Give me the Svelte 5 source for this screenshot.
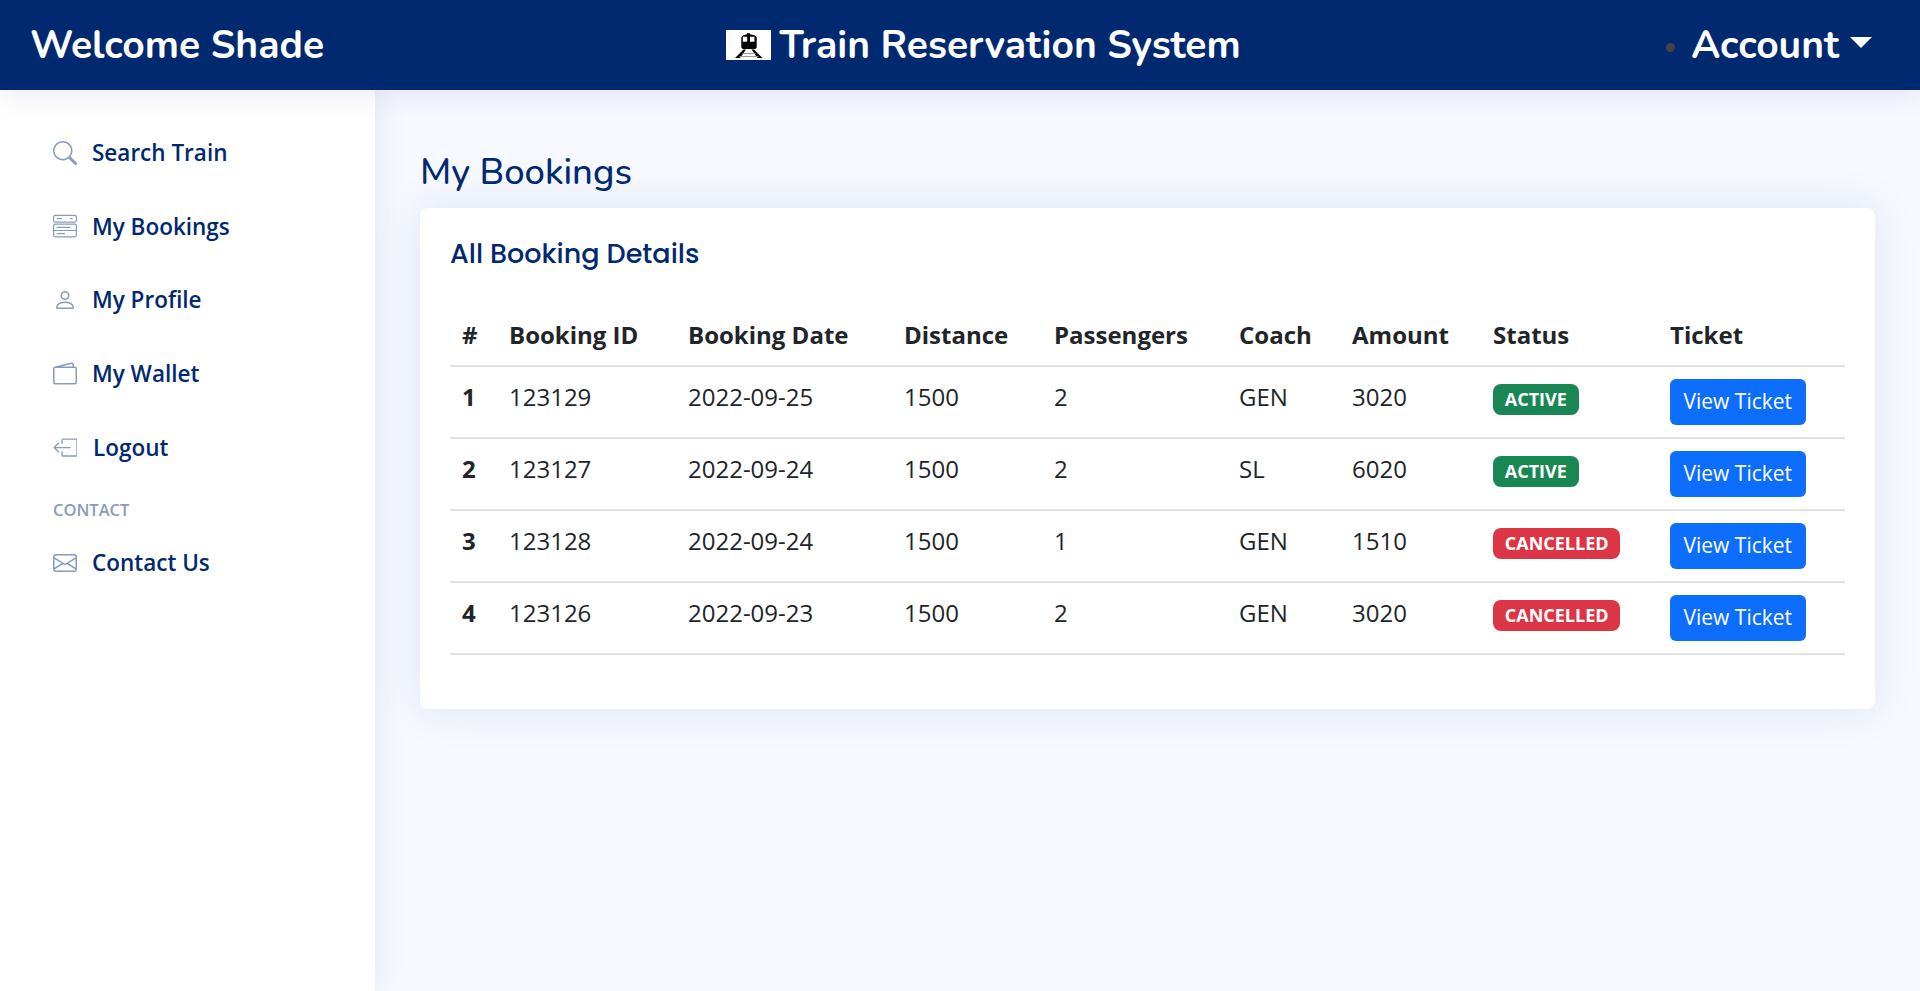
<script>
  const nav = [
    { label: "Search Train", icon: "search" },
    { label: "My Bookings", icon: "stack" },
    { label: "My Profile", icon: "person" },
    { label: "My Wallet", icon: "wallet" },
    { label: "Logout", icon: "logout" },
  ];
  const bookings = [
    { id: 123129, date: "2022-09-25", pax: 2, coach: "GEN", amount: 3020, status: "ACTIVE" },
    { id: 123127, date: "2022-09-24", pax: 2, coach: "SL", amount: 6020, status: "ACTIVE" },
    { id: 123128, date: "2022-09-24", pax: 1, coach: "GEN", amount: 1510, status: "CANCELLED" },
    { id: 123126, date: "2022-09-23", pax: 2, coach: "GEN", amount: 3020, status: "CANCELLED" },
  ];
</script>

{#snippet icon(name)}
  <svg class="icon" viewBox="0 0 16 16" fill="currentColor" aria-hidden="true">
    {#if name === "search"}
      <path d="M11.742 10.344a6.5 6.5 0 1 0-1.397 1.398h-.001c.03.04.062.078.098.115l3.85 3.85a1 1 0 0 0 1.415-1.414l-3.85-3.85a1.007 1.007 0 0 0-.115-.1zM12 6.5a5.5 5.500 0 1 1-11 0 5.5 5.5 0 0 1 11 0z" />
    {:else if name === "stack"}
      <g fill="none" stroke="currentColor" stroke-width=".8">
        <rect x=".4" y=".9" width="15.2" height="4.5" rx="1" />
        <rect x=".4" y="6.8" width="15.2" height="8.400" rx="1" />
        <path d="M.4 11h15.200M2.500 3.100h3.500M11.500 3.100h1.500M2.500 8.900h9M2.500 13.100h5.500" />
      </g>
    {:else if name === "person"}
      <path d="M8 8a3 3 0 1 0 0-6 3 3 0 0 0 0 6zm2-3a2 2 0 1 1-4 0 2 2 0 0 1 4 0zm4 8c0 1-1 1-1 1H3s-1 0-1-1 1-4 6-4 6 3 6 4zm-1-.004c-.001-.246-.154-.986-.832-1.664C11.516 10.68 10.289 10 8 10c-2.29 0-3.516.68-4.168 1.332-.678.678-.83 1.418-.832 1.664h10z" />
    {:else if name === "wallet"}
      <path d="M12.136.326A1.5 1.5 0 0 1 14 1.78V3h.5A1.5 1.5 0 0 1 16 4.5v9a1.5 1.5 0 0 1-1.5 1.5h-13A1.5 1.5 0 0 1 0 13.5v-9a1.5 1.5 0 0 1 1.432-1.499L12.136.326zM5.562 3H13V1.78a.5.5 0 0 0-.621-.484L5.562 3zM1.5 4a.5.5 0 0 0-.5.5v9a.5.5 0 0 0 .5.5h13a.5.5 0 0 0 .5-.5v-9a.5.5 0 0 0-.5-.5h-13z" />
    {:else if name === "logout"}
      <g fill="none" stroke="currentColor" stroke-width=".9" stroke-linecap="round" stroke-linejoin="round">
        <path d="M6 5.500V3.300a.6.6 0 0 1 .6-.6h8.800a.6.6 0 0 1 .6.6v10.100a.6.6 0 0 1-.6.6H6.600a.6.6 0 0 1-.6-.6v-2.200" />
        <path d="M11.500 8.400H.9M3.700 5.500.8 8.400l2.900 2.900" />
      </g>
    {:else}
      <path d="M0 4a2 2 0 0 1 2-2h12a2 2 0 0 1 2 2v8a2 2 0 0 1-2 2H2a2 2 0 0 1-2-2V4Zm2-1a1 1 0 0 0-1 1v.217l7 4.2 7-4.2V4a1 1 0 0 0-1-1H2Zm13 2.383-4.708 2.825L15 11.105V5.383Zm-.034 6.876-5.64-3.471L8 9.583l-1.326-.795-5.64 3.47A1 1 0 0 0 2 13h12a1 1 0 0 0 .966-.741ZM1 11.105l4.708-2.897L1 5.383v5.722Z" />
    {/if}
  </svg>
{/snippet}

<div class="page">
  <header>
    <span class="welcome">Welcome Shade</span>
    <div class="brand">
      <span class="logo">
        <svg viewBox="0 0 45 30" width="45" height="30" aria-hidden="true">
          <path d="M21 3.300h3v.9c3.500.3 6 1.500 6.700 3.300V17c0 1.200-1 2-2.200 2H17.500c-1.200 0-2.200-.8-2.200-2V7.500c.7-1.800 3.200-3 5.700-3.300z" fill="#000" />
          <rect x="16.800" y="6.700" width="4.400" height="5" fill="#fff" />
          <rect x="24" y="6.700" width="4.400" height="5" fill="#fff" />
          <path d="M17.500 19.500h2.500L14 28H9zM25.500 19.500H28l8.500 8.500h-5z" fill="#000" />
          <path d="M16.500 23h13v1h-13zM13.500 26h19v1h-19z" fill="#999" />
        </svg>
      </span>
      <span>Train Reservation System</span>
    </div>
    <div class="account">
      <span class="dot"></span>
      <span>Account</span>
      <span class="caret"></span>
    </div>
  </header>

  <div class="body">
    <aside>
      <ul>
        {#each nav as item}
          <li class:logout={item.icon === "logout"}>
            {@render icon(item.icon)}
            <span>{item.label}</span>
          </li>
        {/each}
      </ul>
      <div class="heading">CONTACT</div>
      <ul>
        <li>
          {@render icon("mail")}
          <span>Contact Us</span>
        </li>
      </ul>
    </aside>

    <main>
      <h1>My Bookings</h1>
      <section class="card">
        <h2>All Booking Details</h2>
        <table>
          <colgroup>
            <col style="width:46px" />
            <col style="width:179px" />
            <col style="width:216px" />
            <col style="width:150px" />
            <col style="width:185px" />
            <col style="width:113px" />
            <col style="width:141px" />
            <col style="width:177px" />
            <col />
          </colgroup>
          <thead>
            <tr>
              <th>#</th>
              <th>Booking ID</th>
              <th>Booking Date</th>
              <th>Distance</th>
              <th>Passengers</th>
              <th>Coach</th>
              <th>Amount</th>
              <th>Status</th>
              <th>Ticket</th>
            </tr>
          </thead>
          <tbody>
            {#each bookings as b, i}
              <tr>
                <th>{i + 1}</th>
                <td>{b.id}</td>
                <td>{b.date}</td>
                <td>1500</td>
                <td>{b.pax}</td>
                <td>{b.coach}</td>
                <td>{b.amount}</td>
                <td><span class="badge" class:danger={b.status === "CANCELLED"}>{b.status}</span></td>
                <td><button type="button">View Ticket</button></td>
              </tr>
            {/each}
          </tbody>
        </table>
      </section>
    </main>
  </div>
</div>

<style>
  :global(body) {
    margin: 0;
    background: #f6f9ff;
    font-family: "Open Sans", sans-serif;
    color: #212529;
  }

  .page {
    height: 100vh;
    min-height: 991px;
    display: flex;
    flex-direction: column;
    overflow: hidden;
  }

  header {
    position: relative;
    z-index: 3;
    height: 90px;
    flex: none;
    padding: 0 48px 0 30px;
    background: #012970;
    color: #fff;
    display: flex;
    align-items: center;
    justify-content: space-between;
    font-family: "Nunito", "Lato", sans-serif;
    font-size: 39px;
    font-weight: 700;
    box-shadow: 0 3px 30px rgba(1, 41, 112, 0.1);
  }

  .brand {
    display: flex;
    align-items: center;
    gap: 9px;
    margin-right: 24px;
  }

  .logo {
    display: block;
    width: 45px;
    height: 30px;
    background: #fff;
  }

  .logo svg {
    display: block;
  }

  .account {
    display: flex;
    align-items: center;
  }

  .dot {
    width: 9px;
    height: 9px;
    margin-right: 16px;
    margin-top: 5px;
    border-radius: 50%;
    background: #444;
  }

  .caret {
    width: 0;
    height: 0;
    margin: -6px 0 0 11px;
    border-top: 11px solid #fff;
    border-left: 11px solid transparent;
    border-right: 11px solid transparent;
  }

  .body {
    flex: 1;
    display: flex;
    min-height: 0;
  }

  aside {
    position: relative;
    z-index: 2;
    width: 375px;
    flex: none;
    box-sizing: border-box;
    padding: 26px 20px 0 53px;
    background: #fff;
    box-shadow: 0 0 30px rgba(1, 41, 112, 0.1);
  }

  ul {
    list-style: none;
    margin: 0;
    padding: 0;
  }

  li {
    height: 73.600px;
    display: flex;
    align-items: center;
    gap: 15px;
    font-size: 22.500px;
    font-weight: 600;
    color: #012970;
  }

  li.logout {
    gap: 16px;
  }

  .icon {
    width: 24px;
    height: 24px;
    flex: none;
    color: #899bbd;
  }

  .heading {
    margin: 14px 0 4px;
    font-size: 16.500px;
    font-weight: 600;
    line-height: 24px;
    color: #899bbd;
  }

  main {
    flex: 1;
    min-width: 0;
    padding: 58px 45px 0;
  }

  h1 {
    margin: 0 0 12px;
    font-family: "Nunito", "Lato", sans-serif;
    font-size: 36.400px;
    font-weight: 500;
    line-height: 48px;
    color: #012970;
  }

  .card {
    padding: 31px 30px 54px;
    background: #fff;
    border-radius: 8px;
    box-shadow: 0 0 45px rgba(1, 41, 112, 0.1);
  }

  h2 {
    margin: 0 0 36px;
    font-family: "Poppins", "Inter", sans-serif;
    font-size: 27px;
    font-weight: 500;
    line-height: 30px;
    color: #012970;
  }

  table {
    width: 100%;
    border-collapse: collapse;
    table-layout: fixed;
    font-size: 24px;
    line-height: 36px;
  }

  th,
  td {
    padding: 12px 13px;
    text-align: left;
    vertical-align: top;
    border-bottom: 2px solid #dee2e6;
    font-weight: 400;
  }

  th {
    font-weight: 700;
  }

  th:first-child {
    padding-left: 12px;
  }

  .badge {
    display: inline-block;
    padding: 0 11.800px;
    height: 31px;
    line-height: 31px;
    border-radius: 8px;
    background: #198754;
    color: #fff;
    font-size: 18px;
    font-weight: 700;
    vertical-align: 0;
  }

  .badge.danger {
    background: #dc3545;
  }

  button {
    display: block;
    height: 46px;
    padding: 0 13.500px 2px;
    border: 0;
    border-radius: 6px;
    background: #0d6efd;
    color: #fff;
    font-family: inherit;
    font-size: 21px;
    white-space: nowrap;
  }
</style>
